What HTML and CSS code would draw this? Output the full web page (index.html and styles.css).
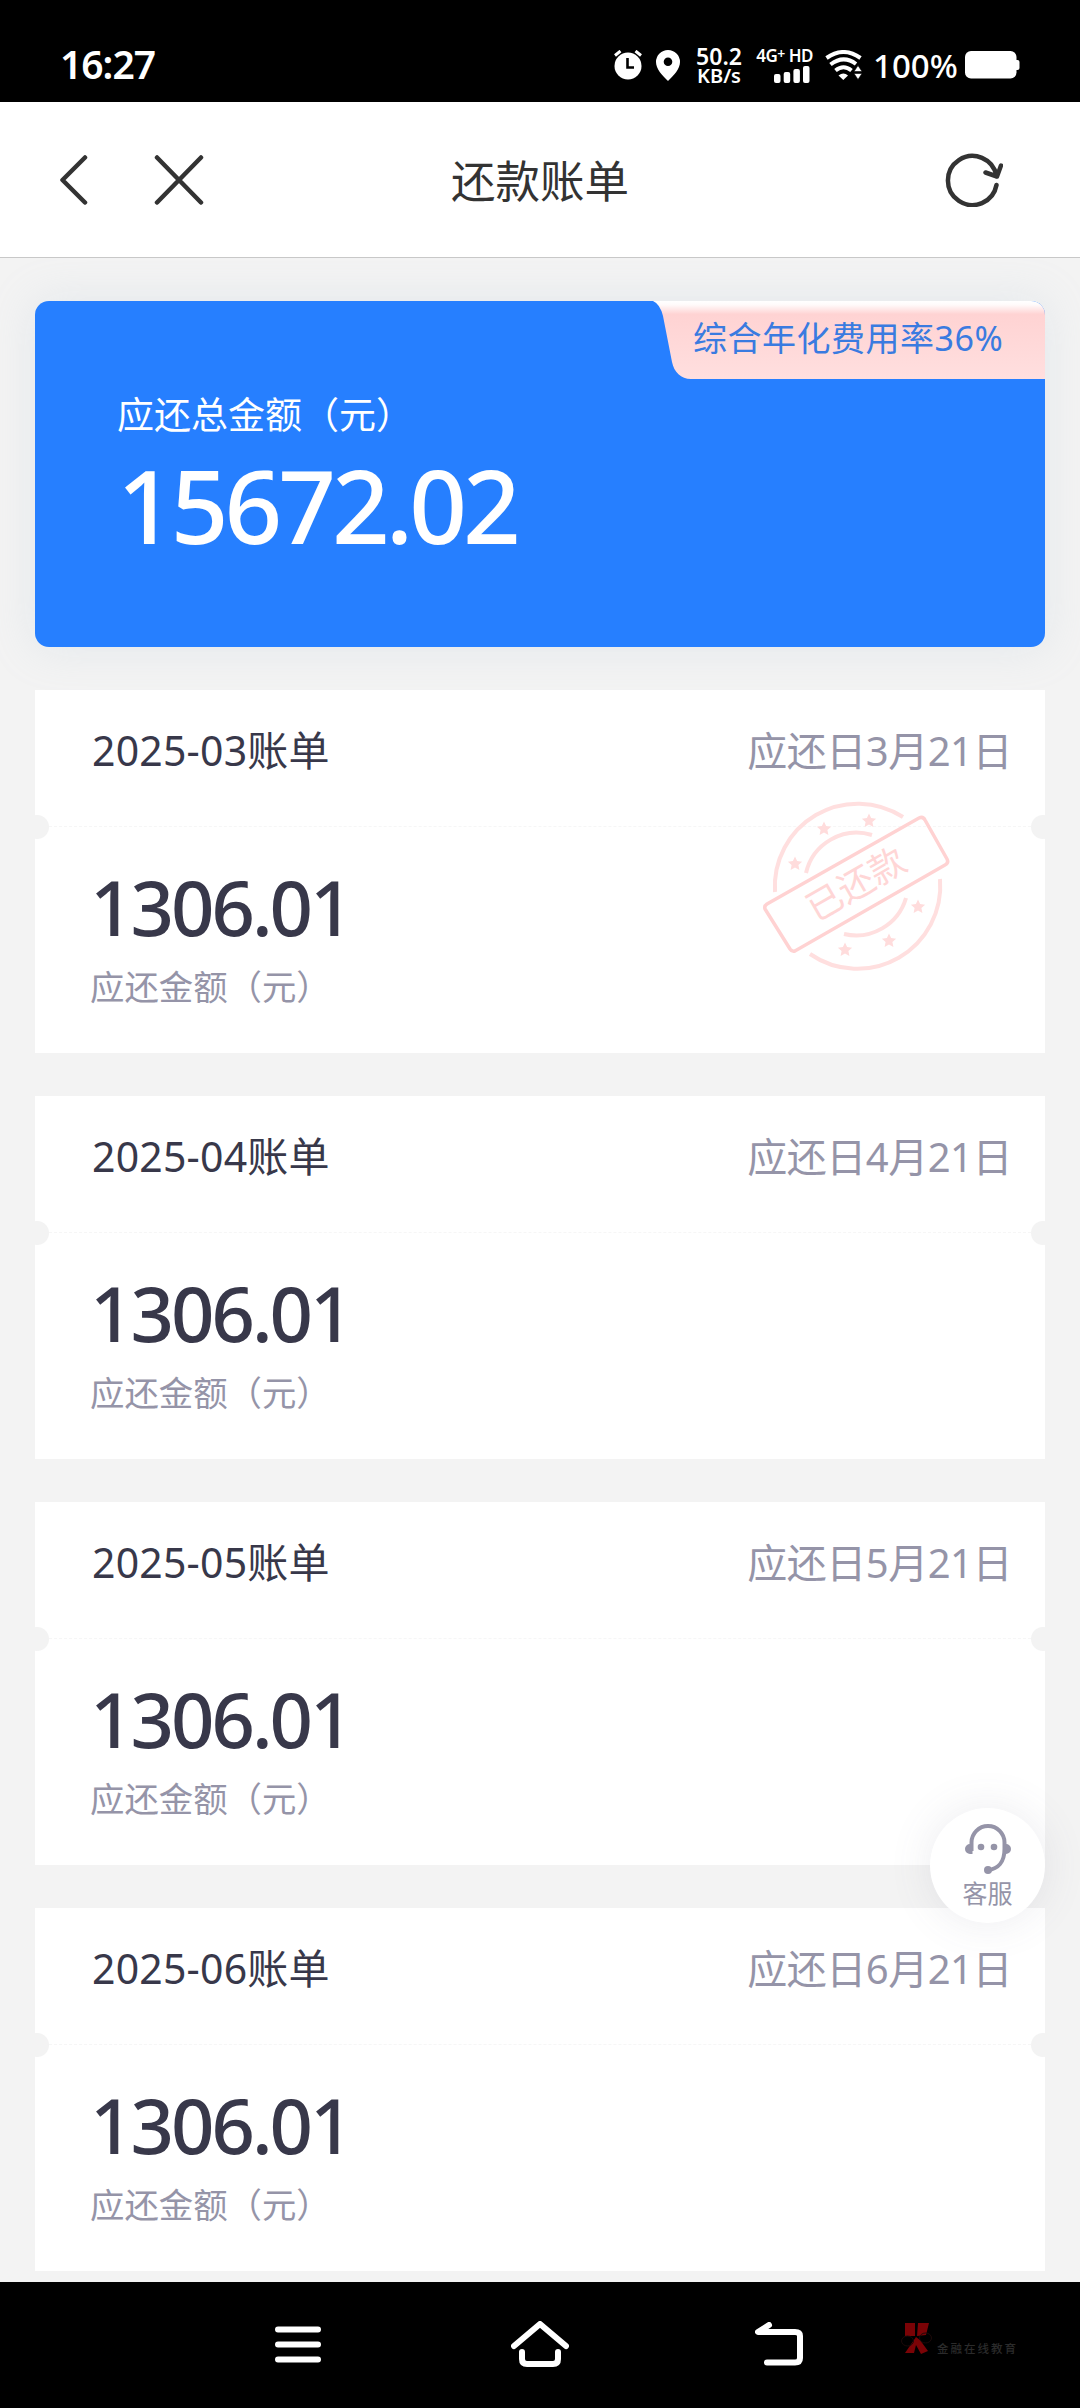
FILE: index.html
```html
<!DOCTYPE html>
<html lang="zh-CN">
<head>
<meta charset="utf-8">
<title>还款账单</title>
<link rel="stylesheet" href="styles.css">
</head>
<body>
<div class="status">
  <span class="clock">16:27</span>
  <div class="indicators">
    <svg class="ind-alarm" width="30" height="30" viewBox="0 0 30 30"><path d="M2 5.500 7.500 1M28 5.500 22.500 1" stroke="#fff" stroke-width="3"/><circle cx="15" cy="16" r="13.500" fill="#fff"/><path d="M14.500 8v9.500H21" fill="none" stroke="#000" stroke-width="2.600"/></svg>
    <svg class="ind-pin" width="24" height="31" viewBox="0 0 24 31"><path fill-rule="evenodd" fill="#fff" d="M12 0a12 12 0 0 1 12 12c0 7-6 13-12 19C6 25 0 19 0 12A12 12 0 0 1 12 0Zm0 7.500a4.300 4.300 0 1 0 0 8.600 4.300 4.300 0 0 0 0-8.600Z"/></svg>
    <div class="speed"><span class="speed-value">50.2</span><span class="speed-unit">KB/s</span></div>
    <div class="signal"><span>4G<sup>+</sup> HD</span>
      <svg width="36" height="17" viewBox="0 0 36 17" fill="#fff"><rect y="8" width="6.500" height="9" rx="2"/><rect x="9.700" y="6" width="6.500" height="11" rx="2"/><rect x="19.400" y="3" width="6.500" height="14" rx="2"/><rect x="29" width="6.500" height="17" rx="2"/></svg>
    </div>
    <svg class="ind-wifi" width="37" height="30" viewBox="0 0 37 30"><g fill="none" stroke="#fff" stroke-width="4"><path d="M1.500 8Q18.500-4 35.500 8"/><path d="M5.500 14.500Q18.500 4.500 31 14"/><path d="M10.500 20.500Q18.500 14 26.500 20.500"/></g><path d="M13.500 25.500q5-4 9.500 0L18.300 30Z" fill="#fff"/><path d="M29 21.500 33 15.500l4 6ZM29 23.500h8L33 29.500Z" fill="#fff" stroke="#000" stroke-width=".6"/></svg>
    <span class="percent">100%</span>
    <svg class="ind-battery" width="55" height="28" viewBox="0 0 55 28" fill="#fff"><rect width="51.500" height="27.500" rx="6"/><rect x="48" y="9" width="6.500" height="10" rx="2"/></svg>
  </div>
</div>
<header class="titlebar">
  <div class="left-actions">
    <svg width="28" height="50" viewBox="0 0 28 50"><path d="M25 2.500 2.500 25 25 47.500" class="line"/></svg>
    <svg width="50" height="50" viewBox="0 0 50 50"><path d="M3 2.500 47 47.500M47 2.500 3 47.500" class="line"/></svg>
  </div>
  <h1>还款账单</h1>
  <svg class="refresh" width="58" height="54" viewBox="0 0 58 54"><path d="M51.500 32A24.500 24.500 0 1 1 51.500 23" class="line"/><path d="M40.500 19.500 52 23.500 56 12.500" class="line"/></svg>
</header>
<main class="page">
  <section class="total">
    <div class="rate">
      <svg width="392" height="78" viewBox="0 0 392 78"><defs><linearGradient id="rateFill" x1="0" y1="0" x2="0" y2="1"><stop offset="0" stop-color="#fff"/><stop offset=".05" stop-color="#fffafa"/><stop offset=".17" stop-color="#ffd3d3"/><stop offset="1" stop-color="#ffdfdf"/></linearGradient></defs><path fill="url(#rateFill)" d="M0 0H378A14 14 0 0 1 392 14V78H38C28 78 21 71 19 61L10 15Q7 3 0 0Z"/></svg>
      <span>综合年化费用率36%</span>
    </div>
    <p class="total-label">应还总金额（元）</p>
    <p class="total-sum">15672.02</p>
  </section>
  <section class="bill">
    <div class="bill-head"><h2>2025-03账单</h2><span>应还日3月21日</span></div>
    <div class="bill-body"><p class="sum">1306.01</p><p class="note">应还金额（元）</p></div>
    <svg class="stamp" width="190" height="172" viewBox="0 0 190 172">
      <defs><path id="star" d="M0-7.500 2.100-2.900 7.100-2.300 3.400 1.100 4.400 6.100 0 3.600-4.400 6.100-3.400 1.100-7.100-2.300-2.100-2.900Z"/></defs>
      <g fill="none" stroke="#ffdfdf" stroke-width="4">
        <path d="M12 92A83 83 0 0 1 140 17"/><path d="M177 79A83 83 0 0 1 47 154"/>
        <path d="M43 73A52 52 0 0 1 109 35"/><path d="M143 98A52 52 0 0 1 81 134"/>
        <path d="M4 104 156 18Q160 16 162 20L184 59Q186 63 182 65L32 151Q29 152 27 149L2 109Q1 106 4 104Z" stroke="#ffd2d2" stroke-width="3.500"/>
      </g>
      <g fill="#ffdcdc"><use href="#star" x="61" y="29"/><use href="#star" x="106" y="21"/><use href="#star" x="32" y="64"/><use href="#star" x="155" y="107"/><use href="#star" x="126" y="141"/><use href="#star" x="82" y="150"/></g>
      <text x="93" y="97" text-anchor="middle" transform="rotate(-30 93 84)">已还款</text>
    </svg>
  </section>
  <section class="bill">
    <div class="bill-head"><h2>2025-04账单</h2><span>应还日4月21日</span></div>
    <div class="bill-body"><p class="sum">1306.01</p><p class="note">应还金额（元）</p></div>
  </section>
  <section class="bill">
    <div class="bill-head"><h2>2025-05账单</h2><span>应还日5月21日</span></div>
    <div class="bill-body"><p class="sum">1306.01</p><p class="note">应还金额（元）</p></div>
  </section>
  <section class="bill">
    <div class="bill-head"><h2>2025-06账单</h2><span>应还日6月21日</span></div>
    <div class="bill-body"><p class="sum">1306.01</p><p class="note">应还金额（元）</p></div>
  </section>
</main>
<a class="service">
  <svg width="48" height="50" viewBox="0 0 48 50"><path d="M7.500 27V18.500A16.500 16.500 0 0 1 40.500 18.500V25C40.500 38 34 45 24 46" fill="none" stroke="#9594a8" stroke-width="4"/><path d="M8.500 20V30H6A5 5 0 0 1 6 20ZM40 20h2a5 5 0 0 1 0 10h-2Z" fill="#9594a8"/><circle cx="17" cy="23" r="3.300" fill="#9594a8"/><circle cx="30" cy="23" r="3.300" fill="#9594a8"/><circle cx="24" cy="46" r="4" fill="#9594a8"/></svg>
  <span>客服</span>
</a>
<nav class="sysnav">
  <svg class="nav-menu" width="46" height="38" viewBox="0 0 46 38"><path d="M3 3.500H43M3 18.500H43M3 33.500H43"/></svg>
  <svg class="nav-home" width="58" height="46" viewBox="0 0 58 46"><path d="M3 25 29 3 55 25M11 31V38Q11 43 16 43H42Q47 43 47 38V31"/></svg>
  <svg class="nav-back" width="48" height="44" viewBox="0 0 48 44"><path d="M14 3 3 10H40Q45 10 45 14V36Q45 40.500 40 40.500H12"/></svg>
  <div class="mark">
    <svg width="32" height="34" viewBox="0 0 32 34"><path fill="#7b0306" d="M4 2H14V15H4ZM17 2H28L25 14 16 15ZM15 16 19 19 27 30 20 33 15 24 13 32 4 32Z"/><g fill="none" stroke="#1c0a0a"><ellipse cx="6.500" cy="20" rx="6" ry="5"/><ellipse cx="24.500" cy="17" rx="6" ry="5"/></g></svg>
    <span>金融在线教育</span>
  </div>
</nav>
</body>
</html>
```
FILE: styles.css
```css
* { box-sizing: border-box; }
body {
  margin: 0;
  width: 1080px;
  height: 2408px;
  overflow: hidden;
  display: flex;
  flex-direction: column;
  background: #f3f3f3;
  font-family: "Noto Sans", "Noto Sans CJK SC", sans-serif;
}
h1, h2, p { margin: 0; font-weight: 400; }
svg { display: block; flex: none; }
.line { fill: none; stroke: #333; stroke-width: 4.5; stroke-linecap: round; stroke-linejoin: round; }

.status {
  height: 102px;
  flex: none;
  padding: 26px 60px 0 60px;
  display: flex;
  justify-content: space-between;
  background: #000;
  color: #fff;
}
.clock { font-size: 39px; font-weight: 600; line-height: 76px; letter-spacing: -1px; white-space: nowrap; }
.indicators { display: flex; align-items: center; height: 78px; }
.ind-pin { margin-left: 13px; }
.speed {
  width: 48px;
  margin-left: 15px;
  display: flex;
  flex-direction: column;
  align-items: center;
  font-weight: 600;
}
.speed-value { font-size: 23px; line-height: 21px; }
.speed-unit { font-size: 20px; line-height: 18px; }
.signal {
  width: 57px;
  margin-left: 13px;
  display: flex;
  flex-direction: column;
  align-items: flex-end;
  gap: 2px;
  font-size: 17px;
  font-weight: 600;
  line-height: 16px;
  letter-spacing: -.5px;
  white-space: nowrap;
}
.signal sup { font-size: 14px; line-height: 0; vertical-align: 3px; }
.signal svg { margin-right: 3px; }
.ind-wifi { margin-left: 12px; }
.percent { width: 84px; margin-left: 11px; font-size: 33px; font-weight: 500; white-space: nowrap; }
.ind-battery { margin-left: 8px; }

.titlebar {
  height: 156px;
  flex: none;
  padding: 0 60px;
  display: grid;
  grid-template-columns: 1fr auto 1fr;
  align-items: center;
  background: #fff;
  border-bottom: 1px solid #c8c8c8;
}
.left-actions { display: flex; gap: 66px; }
.titlebar h1 { padding-top: 3px; font-size: 44.5px; line-height: 60px; color: #333; }
.refresh { justify-self: end; margin-right: 17px; }

.page {
  flex: 1;
  min-height: 0;
  overflow: hidden;
  padding: 43px 35px 0;
  display: flex;
  flex-direction: column;
  gap: 43px;
}
.total {
  position: relative;
  flex: none;
  height: 346px;
  padding: 87px 82px;
  border-radius: 14px;
  background: #267fff;
  box-shadow: 0 0 44px rgba(180, 200, 215, .25);
  color: #fff;
}
.rate { position: absolute; top: 0; right: 0; width: 392px; height: 78px; }
.rate span {
  position: absolute;
  left: 40px;
  top: 12px;
  font-size: 34px;
  line-height: 50px;
  letter-spacing: .5px;
  color: #3a7be0;
  white-space: nowrap;
}
.total-label { font-size: 37px; line-height: 54px; }
.total-sum { font-size: 101px; font-weight: 500; line-height: 126px; letter-spacing: -4px; }

.bill {
  position: relative;
  flex: none;
  height: 363px;
  background: radial-gradient(circle at 2px 137px, #f3f3f3 11.5px, transparent 12.5px), radial-gradient(circle at calc(100% - 2px) 137px, #f3f3f3 11.5px, transparent 12.5px), #fff;
}
.bill-head {
  height: 136px;
  padding: 31px 33px 0 57px;
  display: flex;
  justify-content: space-between;
  font-size: 40px;
  line-height: 60px;
}
.bill-head h2 { font-size: 41px; line-height: 59px; color: #38384a; letter-spacing: .2px; }
.bill-head span { color: #9594a8; letter-spacing: -.5px; }
.bill-body { margin: 0 14px; padding: 37px 41px 0; border-top: 1px dashed #f6f6f6; }
.sum { font-size: 76px; font-weight: 500; line-height: 86px; letter-spacing: -3px; color: #38384a; }
.note { font-size: 34.4px; line-height: 50px; margin-top: 12px; color: #9594a8; }
.stamp { position: absolute; left: 728px; top: 110px; }
.stamp text { font-size: 36px; fill: #ffd6d6; }

.service {
  position: absolute;
  left: 930px;
  top: 1808px;
  width: 115px;
  height: 115px;
  padding-top: 16px;
  border-radius: 50%;
  background: #fff;
  box-shadow: 0 0 44px rgba(100, 100, 120, .12);
  display: flex;
  flex-direction: column;
  align-items: center;
  font-size: 25px;
  line-height: 38px;
  color: #9594a8;
}

.sysnav {
  height: 126px;
  flex: none;
  padding: 0 60px 0 275px;
  display: flex;
  align-items: center;
  background: #000;
}
.sysnav > svg { fill: none; stroke: #fff; stroke-width: 6; stroke-linecap: round; stroke-linejoin: round; }
.nav-home { margin-left: 190px; }
.nav-back { margin-left: 186px; }
.nav-home, .nav-back { margin-top: -3px; }
.mark { display: flex; margin: -12px 0 0 98px; color: #2b2b2b; font-size: 11.5px; font-weight: 500; }
.mark span { letter-spacing: 2px; margin: 19px 0 0 4px; line-height: 18px; white-space: nowrap; }
```
